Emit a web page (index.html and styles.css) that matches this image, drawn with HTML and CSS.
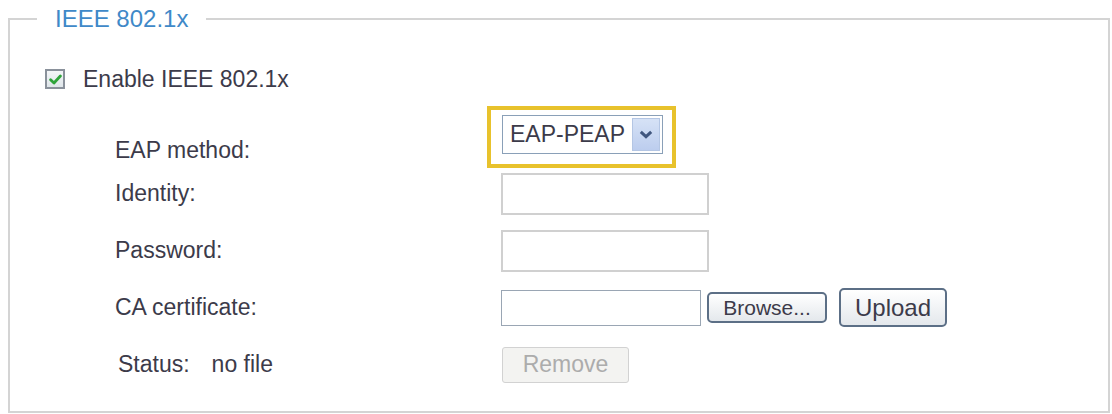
FILE: index.html
```html
<!DOCTYPE html>
<html lang="en">
<head>
    <meta charset="UTF-8">
    <title>IEEE 802.1x</title>
    <link rel="stylesheet" href="styles.css">
</head>
<body>
    <fieldset class="panel">
        <legend>IEEE 802.1x</legend>

        <label class="enable-row">
            <span class="check">
                <svg width="13" height="11" viewBox="0 0 12 10"><path d="M1.5 5.2 L4.6 8.2 L10.5 1.8" fill="none" stroke="#2fa43a" stroke-width="2.6" stroke-linecap="round" stroke-linejoin="round"/></svg>
            </span>
            Enable IEEE 802.1x
        </label>

        <div class="form-grid">
            <div class="label label-low">EAP method:</div>
            <div class="control">
                <div class="highlight">
                    <div class="select">
                        <span class="select-value">EAP-PEAP</span>
                        <span class="select-btn">
                            <svg width="14" height="9" viewBox="0 0 14 9"><path d="M1.8 1.8 L7 6.6 L12.2 1.8" fill="none" stroke="#40567e" stroke-width="3"/></svg>
                        </span>
                    </div>
                </div>
            </div>

            <div class="label">Identity:</div>
            <div class="control"><div class="input"></div></div>

            <div class="label">Password:</div>
            <div class="control"><div class="input"></div></div>

            <div class="label">CA certificate:</div>
            <div class="control">
                <div class="input input-file"></div>
                <button class="btn btn-browse">Browse...</button>
                <button class="btn btn-upload">Upload</button>
            </div>

            <div class="label label-status"><span>Status:</span><span class="status-value">no file</span></div>
            <div class="control"><button class="btn btn-remove" disabled>Remove</button></div>
        </div>
    </fieldset>
</body>
</html>
```

FILE: styles.css
```css
* {
    box-sizing: border-box;
}

body {
    margin: 0;
    background: #ffffff;
    font-family: 'Liberation Sans', Arial, sans-serif;
    color: #3c3b4a;
}

.panel {
    margin: 5px 2px 0 8px;
    padding: 0 0 18px 0;
    border: 2px solid #d4d4d4;
    min-height: 407px;
}

.panel legend {
    margin-left: 27px;
    padding: 0 18px;
    font-size: 24px;
    color: #3f89c8;
}

.enable-row {
    display: flex;
    align-items: center;
    gap: 18px;
    height: 30px;
    margin-top: 31px;
    padding-left: 35px;
    font-size: 23px;
}

.check {
    width: 20px;
    height: 20px;
    border: 2px solid #8a919b;
    background: linear-gradient(#f4f6f8, #dfe6ea);
    display: flex;
    align-items: center;
    justify-content: center;
}

.form-grid {
    display: grid;
    grid-template-columns: 386px 1fr;
    grid-auto-rows: 57px;
    align-items: center;
    margin-top: 14px;
    padding-left: 105px;
}

.label {
    font-size: 23px;
}

.label-low {
    padding-top: 28px;
}

.label-status {
    padding-left: 3px;
}

.status-value {
    margin-left: 22px;
}

.control {
    display: flex;
    align-items: center;
}

.highlight {
    margin-left: -14px;
    border: 4px solid #e8c22c;
    padding: 5px 9px 10px 11px;
}

.select {
    width: 161px;
    height: 39px;
    border: 1px solid #8aa0b8;
    display: flex;
    align-items: center;
    justify-content: space-between;
    padding: 0 2px 0 7px;
    font-size: 23px;
}

.select-btn {
    width: 28px;
    height: 33px;
    background: linear-gradient(#d6e2f6, #bccdee);
    border: 1px solid #b4c6e4;
    display: flex;
    align-items: center;
    justify-content: center;
}

.input {
    width: 208px;
    height: 42px;
    border: 2px solid #d0d0d0;
    background: #fff;
}

.input-file {
    width: 200px;
    height: 36px;
    border: 1px solid #9aa6b4;
}

.btn {
    font-family: 'Liberation Sans', Arial, sans-serif;
    color: #3c3b4a;
    background: linear-gradient(#ffffff, #e4e8ec);
    border: 2px solid #5c6f86;
    border-radius: 5px;
    padding: 0;
}

.btn-browse {
    width: 120px;
    height: 31px;
    margin-left: 6px;
    font-size: 21px;
}

.btn-upload {
    width: 108px;
    height: 39px;
    margin-left: 12px;
    font-size: 24px;
}

.btn-remove {
    width: 127px;
    height: 36px;
    margin-left: 1px;
    font-size: 23px;
    color: #acacac;
    background: #f3f3f1;
    border: 1px solid #d2d2d2;
    border-radius: 3px;
}
```
